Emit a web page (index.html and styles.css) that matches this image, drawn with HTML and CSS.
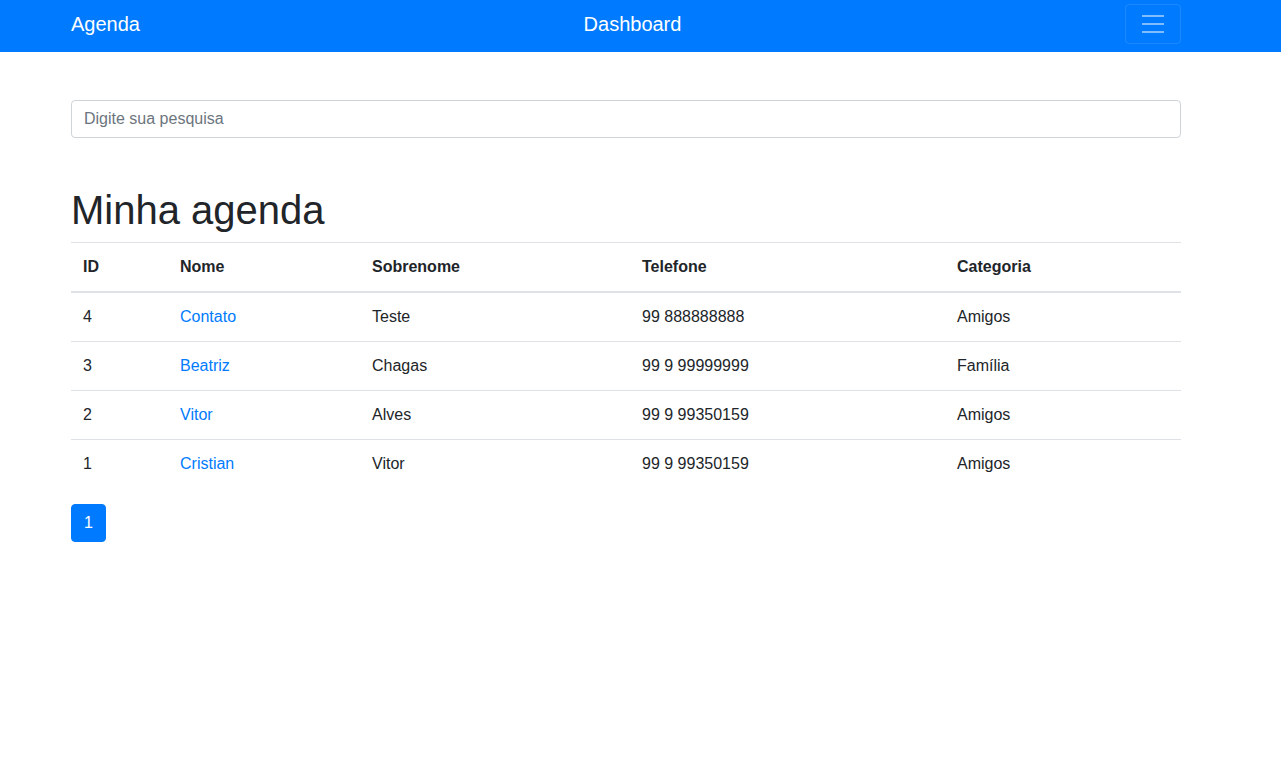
FILE: index.html
```html
<!DOCTYPE html>
<html lang="pt-BR">
<head>
<meta charset="utf-8">
<title>Agenda</title>
<link rel="stylesheet" href="styles.css">
</head>
<body>
<nav class="navbar">
  <div class="container nav-inner">
    <a class="brand" href="#">Agenda</a>
    <a class="brand" href="#">Dashboard</a>
    <button class="toggler" type="button" aria-label="Menu">
      <svg class="toggler-icon" width="30" height="30" viewBox="0 0 30 30">
        <path d="M4 7h22M4 15h22M4 23h22" stroke="rgba(255,255,255,0.5)" stroke-width="2" stroke-linecap="butt" fill="none"/>
      </svg>
    </button>
  </div>
</nav>
<main class="container main">
  <input class="search" type="text" placeholder="Digite sua pesquisa">
  <h1 class="title">Minha agenda</h1>
  <table class="table">
    <thead>
      <tr>
        <th class="c-id">ID</th>
        <th class="c-nome">Nome</th>
        <th class="c-sob">Sobrenome</th>
        <th class="c-tel">Telefone</th>
        <th class="c-cat">Categoria</th>
      </tr>
    </thead>
    <tbody>
      <tr><td>4</td><td><a href="#">Contato</a></td><td>Teste</td><td>99 888888888</td><td>Amigos</td></tr>
      <tr><td>3</td><td><a href="#">Beatriz</a></td><td>Chagas</td><td>99 9 99999999</td><td>Família</td></tr>
      <tr><td>2</td><td><a href="#">Vitor</a></td><td>Alves</td><td>99 9 99350159</td><td>Amigos</td></tr>
      <tr><td>1</td><td><a href="#">Cristian</a></td><td>Vitor</td><td>99 9 99350159</td><td>Amigos</td></tr>
    </tbody>
  </table>
  <ul class="pagination">
    <li><a class="page active" href="#">1</a></li>
  </ul>
</main>
</body>
</html>
```
FILE: styles.css
```css
* { box-sizing: border-box; }
html, body {
  margin: 0;
  padding: 0;
  background: #fff;
  color: #212529;
  font-family: "Liberation Sans", Arial, sans-serif;
  font-size: 16px;
  line-height: 1.5;
}
.container {
  width: 1110px;
  margin-left: 71px;
}
.navbar {
  background: #007bff;
  height: 52px;
  padding: 4px 0 8px;
}
.nav-inner {
  height: 40px;
  display: flex;
  align-items: center;
  justify-content: space-between;
}
.brand {
  color: #fff;
  text-decoration: none;
  font-size: 20px;
  line-height: 30px;
}
.toggler {
  width: 56px;
  height: 40px;
  padding: 0;
  background: transparent;
  border: 1px solid rgba(255,255,255,0.1);
  border-radius: 4px;
  display: flex;
  align-items: center;
  justify-content: center;
}
.toggler-icon { display: block; }
.main {
  padding-top: 48px;
}
.search {
  display: block;
  width: 100%;
  height: 38px;
  padding: 6px 12px;
  font-family: inherit;
  font-size: 16px;
  line-height: 24px;
  color: #495057;
  border: 1px solid #ced4da;
  border-radius: 4px;
  background: #fff;
}
.search::placeholder { color: #6c757d; opacity: 1; }
.title {
  margin: 48px 0 8px;
  font-size: 40px;
  font-weight: 500;
  line-height: 48px;
}
.table {
  width: 100%;
  border-collapse: collapse;
  margin-bottom: 16px;
}
.table th, .table td {
  padding: 12px;
  text-align: left;
  vertical-align: top;
  border-top: 1px solid #dee2e6;
  line-height: 24px;
}
.table thead th {
  border-bottom: 2px solid #dee2e6;
  font-weight: 700;
}
.table a { color: #007bff; text-decoration: none; }
.c-id { width: 97px; }
.c-nome { width: 192px; }
.c-sob { width: 270px; }
.c-tel { width: 315px; }
.c-cat { width: 236px; }
.pagination {
  list-style: none;
  margin: 0;
  padding: 0;
  display: flex;
}
.page {
  display: block;
  width: 35px;
  text-align: center;
  padding: 6px 0;
  line-height: 24px;
  border: 1px solid #007bff;
  border-radius: 4px;
  background: #007bff;
  color: #fff;
  text-decoration: none;
}
```
